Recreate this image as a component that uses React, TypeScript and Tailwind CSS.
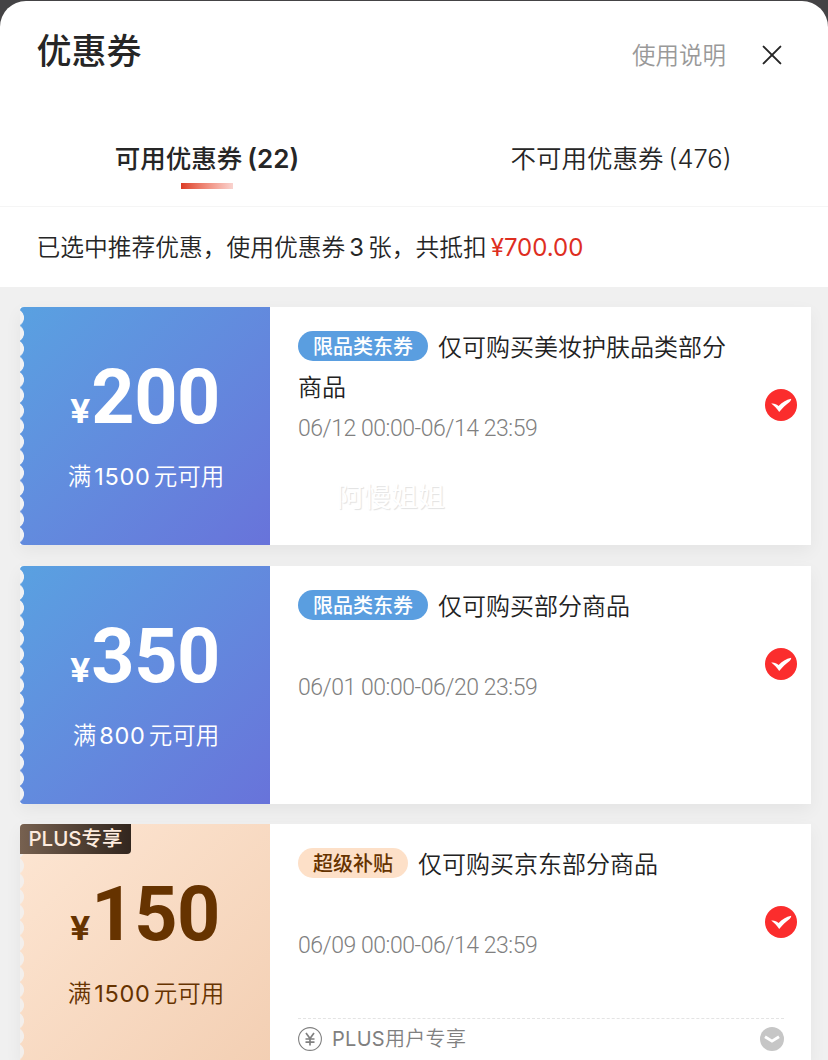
import { X } from "lucide-react"

interface Coupon {
    id: number;
    amount: string;
    limit: number;
    tag: string;
    title: string;
    period: string;
    plus?: boolean;
    watermark?: string;
}

const coupons: Coupon[] = [
    { id: 1, amount: "200", limit: 1500, tag: "限品类东券", title: "仅可购买美妆护肤品类部分商品", period: "06/12 00:00-06/14 23:59", watermark: "阿慢姐姐" },
    { id: 2, amount: "350", limit: 800, tag: "限品类东券", title: "仅可购买部分商品", period: "06/01 00:00-06/20 23:59" },
    { id: 3, amount: "150", limit: 1500, tag: "超级补贴", title: "仅可购买京东部分商品", period: "06/09 00:00-06/14 23:59", plus: true },
]

function CheckedIcon() {
    return (
        <svg className="w-8 h-8" viewBox="0 0 32 32" fill="none">
            <circle cx="16" cy="16" r="16" fill="#FB2D2D" />
            <path d="M6.2 14.6C9 14.2 11.6 15.2 13.6 16.9C17 13.6 21 10.9 26.2 9.8C26.2 11.2 25.6 12 24.6 12.9C20.8 15.6 17.4 18.8 14.2 23C12.2 20 9.6 17 6.2 14.6Z" fill="white" />
        </svg>
    )
}

function YenIcon() {
    return (
        <svg className="w-6 h-6" viewBox="0 0 24 24" fill="none" stroke="#808080">
            <circle cx="12" cy="12" r="11.4" strokeWidth="1.1" />
            <path d="M8 6L12 11.5L16 6M12 11.5V18.5M7.5 12H16.5M7.5 15.2H16.5" strokeWidth="1.7" />
        </svg>
    )
}

function ExpandIcon() {
    return (
        <svg className="w-6 h-6" viewBox="0 0 24 24" fill="none">
            <circle cx="12" cy="12" r="12" fill="#C6C6C6" />
            <path d="M5 9.8L12 14.2L19 9.8" stroke="white" strokeWidth="2.8" />
        </svg>
    )
}

function CouponCard({ coupon }: { coupon: Coupon }) {
    const { plus } = coupon
    return (
        <div className="relative flex h-[238px] flex-shrink-0 bg-white shadow-[0_6px_16px_rgba(0,0,0,0.05)]">
            {/* amount */}
            <div className={`relative w-[250px] flex-shrink-0 rounded-l-[4px] pt-[50px] text-center ${
                plus ? 'bg-linear-135 from-[#fde6d3] to-[#f3cfb3] text-[#663300]' : 'bg-linear-135 from-[#59a1e1] to-[#6873da] text-white'
            }`}>
                {/* torn edge */}
                <div className={`absolute left-0 top-[3px] h-[232px] w-[5px] bg-[length:5px_15.5px] bg-repeat-y ${
                    plus
                        ? 'bg-[radial-gradient(circle_at_-5px_7.75px,#f3efec_8.6px,transparent_9.3px)]'
                        : 'bg-[radial-gradient(circle_at_-5px_7.75px,#f1f2f4_8.6px,transparent_9.3px)]'
                }`} />
                {plus && (
                    <div className="absolute left-0 top-0 flex h-[30px] w-[111px] items-center justify-center rounded-tl-[4px] rounded-br-[4px] bg-linear-to-r from-[#776150] to-[#32261e] pt-px text-[20.5px] font-medium text-[#fdebde]">
                        PLUS专享
                    </div>
                )}
                <div className="flex h-[90px] items-baseline justify-center font-bold leading-[80px]">
                    <span className="origin-left scale-x-112 text-[32px]">¥</span>
                    <span className="ml-[3px] font-['Roboto'] text-[75.5px] tracking-[-0.4px]">{coupon.amount}</span>
                </div>
                <div className="mt-[10px] pl-[2px] text-[23.5px] font-[350] leading-[40px]">
                    满<span className="mx-[3px] font-normal tracking-[0.7px]">{coupon.limit}</span>元可用
                </div>
            </div>

            {/* details */}
            <div className="flex-1 pl-[28px] pt-[21px]">
                <div className="h-[80px] w-[440px] text-[24px] font-[350] leading-[40px] text-[#222]">
                    <span className={`mr-[10px] inline-flex h-[30px] items-center rounded-full px-[15px] align-[2px] text-[20px] font-medium leading-[30px] ${
                        plus ? 'bg-[#fde0c8] text-[#663300]' : 'bg-[#5a9ee0] text-white'
                    }`}>
                        <span className="pt-[2px]">{coupon.tag}</span>
                    </span>
                    {coupon.title}
                </div>
                <div className="h-[93px] font-['Roboto'] text-[23px] font-[350] leading-[41px] tracking-[-0.46px] text-[#808080]">
                    {coupon.period}
                </div>
                {plus && (
                    <div className="mr-[27px] flex h-[41px] items-center gap-[10px] border-t border-dashed border-[#e4e4e4] text-[20px] font-[350] text-[#808080]">
                        <YenIcon />
                        <span className="flex-1 tracking-[0.3px]"><span className="font-normal">PLUS</span>用户专享</span>
                        <ExpandIcon />
                    </div>
                )}
            </div>

            <div className="absolute right-[14px] top-[82px] w-8">
                <CheckedIcon />
            </div>
            {coupon.watermark && (
                <div className="absolute left-[317px] top-[171px] text-[27px] leading-[40px] text-white [text-shadow:1px_1px_1px_#e2e2e2]">
                    {coupon.watermark}
                </div>
            )}
        </div>
    )
}

export default function App() {
    return (
        <div className="h-[1060px] w-[828px] overflow-hidden bg-[#444345] pt-px font-['Inter','Noto_Sans_CJK_SC',sans-serif] text-[#262626]">
            <div className="flex h-[1059px] flex-col overflow-hidden rounded-t-[26px] bg-white">
                {/* header */}
                <div className="flex h-[108px] flex-shrink-0 items-center pl-[36.5px] pr-[44px]">
                    <h1 className="flex-1 pb-[7px] text-[35px] font-medium">优惠券</h1>
                    <span className="pt-[2px] text-[23.5px] font-[350] text-[#999]">使用说明</span>
                    <X className="ml-[34px] h-6 w-6 scale-[1.4]" strokeWidth={1.4} />
                </div>

                {/* tabs */}
                <div className="flex h-[98px] flex-shrink-0 border-b border-[#f5f5f5]">
                    <div className="flex flex-1 flex-col items-center pt-[30px]">
                        <span className="text-[25.5px] font-medium leading-[40px]">可用优惠券<span className="ml-[5px] text-[26px] font-semibold">(22)</span></span>
                        <div className="mt-[4px] h-[6px] w-[52px] bg-linear-to-r from-[#dc3a24] to-[#f9d3cf]" />
                    </div>
                    <div className="flex flex-1 flex-col items-center pt-[30px]">
                        <span className="text-[25.5px] font-[350] leading-[40px]">不可用优惠券<span className="ml-[5px]">(476)</span></span>
                    </div>
                </div>

                {/* summary */}
                <div className="flex h-[80px] flex-shrink-0 items-center pl-[36.5px] pt-[2px] text-[23.75px] font-[350]">
                    已选中推荐优惠，使用优惠券<span className="mx-[4px] font-normal">3</span>张，共抵扣
                    <span className="ml-[4px] text-[24px] font-normal text-[#de2e1f]">¥700.00</span>
                </div>

                {/* coupon list */}
                <div className="flex flex-1 flex-col gap-[20.5px] overflow-hidden bg-[#f0f0f0] pl-[20px] pr-[17px] pt-[20px]">
                    {coupons.map((coupon) => (
                        <CouponCard key={coupon.id} coupon={coupon} />
                    ))}
                </div>
            </div>
        </div>
    )
}
